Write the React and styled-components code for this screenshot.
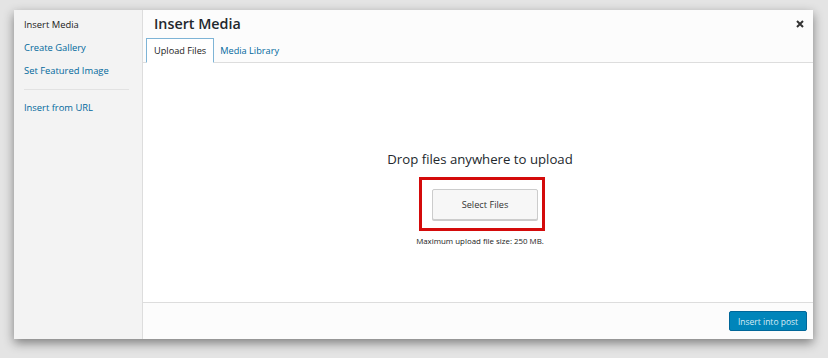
import React from "react";
import styled, { createGlobalStyle } from "styled-components";

const GlobalStyle = createGlobalStyle`
  html, body {
    margin: 0;
    padding: 0;
    background: #e4e4e4;
    font-family: "Open Sans", "Liberation Sans", sans-serif;
  }
`;

const Page = styled.div`
  width: 828px;
  height: 358px;
  padding: 10px 0 0 14px;
  box-sizing: border-box;
`;

const Modal = styled.div`
  width: 799px;
  height: 329px;
  display: flex;
  background: #fff;
  box-shadow: 0 4px 10px rgba(0, 0, 0, 0.45);
`;

const Sidebar = styled.div`
  width: 129px;
  background: #f3f3f3;
  border-right: 1px solid #dddddd;
  padding: 3px 0 0 10px;
  box-sizing: border-box;
  display: flex;
  flex-direction: column;
`;

const MenuItem = styled.a`
  font-size: 9.4px;
  line-height: 13px;
  padding: 5px 0;
  color: ${(p) => (p.active ? "#1a1a1a" : "#00689c")};
  text-decoration: none;
`;

const Separator = styled.div`
  width: 105px;
  height: 1px;
  background: #e2e2e2;
  margin: 7px 0 6px;
`;

const Main = styled.div`
  flex: 1;
  display: flex;
  flex-direction: column;
  position: relative;
`;

const Header = styled.div`
  height: 53px;
  background: #fcfcfc;
  border-bottom: 1px solid #dddddd;
  box-sizing: border-box;
  display: flex;
  flex-direction: column;
  justify-content: space-between;
`;

const Title = styled.h1`
  margin: 0;
  padding: 4px 0 0 11px;
  font-size: 14.3px;
  font-weight: 600;
  color: #23282d;
  line-height: 20px;
`;

const Tabs = styled.div`
  display: flex;
  padding-left: 3px;
  margin-bottom: -1px;
`;

const Tab = styled.div`
  height: 25px;
  box-sizing: border-box;
  padding: 0 ${(p) => (p.active ? "7px" : "5px")};
  font-size: 9.2px;
  line-height: 23px;
  color: ${(p) => (p.active ? "#1a1a1a" : "#00689c")};
  border: 1px solid ${(p) => (p.active ? "#7eb4d6" : "transparent")};
  border-bottom-color: ${(p) => (p.active ? "#fff" : "transparent")};
  background: ${(p) => (p.active ? "#fff" : "transparent")};
`;

const Close = styled.button`
  position: absolute;
  top: 6px;
  right: 5px;
  width: 16px;
  height: 16px;
  border: 0;
  padding: 0;
  background: transparent;
  display: flex;
  align-items: center;
  justify-content: center;
`;

const Content = styled.div`
  flex: 1;
  display: flex;
  flex-direction: column;
  align-items: center;
  padding: 87px 0 0 4px;
  box-sizing: border-box;
`;

const DropText = styled.h2`
  margin: 0;
  font-size: 13.2px;
  font-weight: 400;
  color: #23282d;
  line-height: 18px;
`;

const Highlight = styled.div`
  margin: 9px 0 0 4px;
  width: 126px;
  height: 54px;
  box-sizing: border-box;
  border: 3px solid #d40b0b;
  display: flex;
  align-items: center;
  justify-content: center;
  padding-left: 6px;
`;

const SelectButton = styled.button`
  width: 106px;
  height: 31px;
  font-family: inherit;
  font-size: 9.2px;
  color: #333;
  background: #f7f7f7;
  border: 1px solid #cccccc;
  border-radius: 2px;
  box-shadow: 0 1px 0 #ccc;
`;

const MaxSize = styled.p`
  margin: 5px 0 0;
  font-size: 7.9px;
  color: #222;
`;

const Footer = styled.div`
  height: 37px;
  background: #fcfcfc;
  border-top: 1px solid #dddddd;
  box-sizing: border-box;
  display: flex;
  justify-content: flex-end;
  align-items: center;
  padding-right: 6px;
`;

const PrimaryButton = styled.button`
  width: 78px;
  height: 20px;
  font-family: inherit;
  font-size: 8.5px;
  color: #d8ecf6;
  background: #0085ba;
  border: 1px solid #006799;
  border-radius: 2px;
  padding: 0;
`;

export default function App() {
  return (
    <>
      <GlobalStyle />
      <Page>
        <Modal>
          <Sidebar>
            <MenuItem active>Insert Media</MenuItem>
            <MenuItem>Create Gallery</MenuItem>
            <MenuItem>Set Featured Image</MenuItem>
            <Separator />
            <MenuItem>Insert from URL</MenuItem>
          </Sidebar>
          <Main>
            <Header>
              <Title>Insert Media</Title>
              <Tabs>
                <Tab active>Upload Files</Tab>
                <Tab>Media Library</Tab>
              </Tabs>
            </Header>
            <Close aria-label="Close">
              <svg width="8" height="8" viewBox="0 0 8 8">
                <path d="M1 1L7 7M7 1L1 7" stroke="#333" strokeWidth="2" />
              </svg>
            </Close>
            <Content>
              <DropText>Drop files anywhere to upload</DropText>
              <Highlight>
                <SelectButton>Select Files</SelectButton>
              </Highlight>
              <MaxSize>Maximum upload file size: 250 MB.</MaxSize>
            </Content>
            <Footer>
              <PrimaryButton>Insert into post</PrimaryButton>
            </Footer>
          </Main>
        </Modal>
      </Page>
    </>
  );
}
